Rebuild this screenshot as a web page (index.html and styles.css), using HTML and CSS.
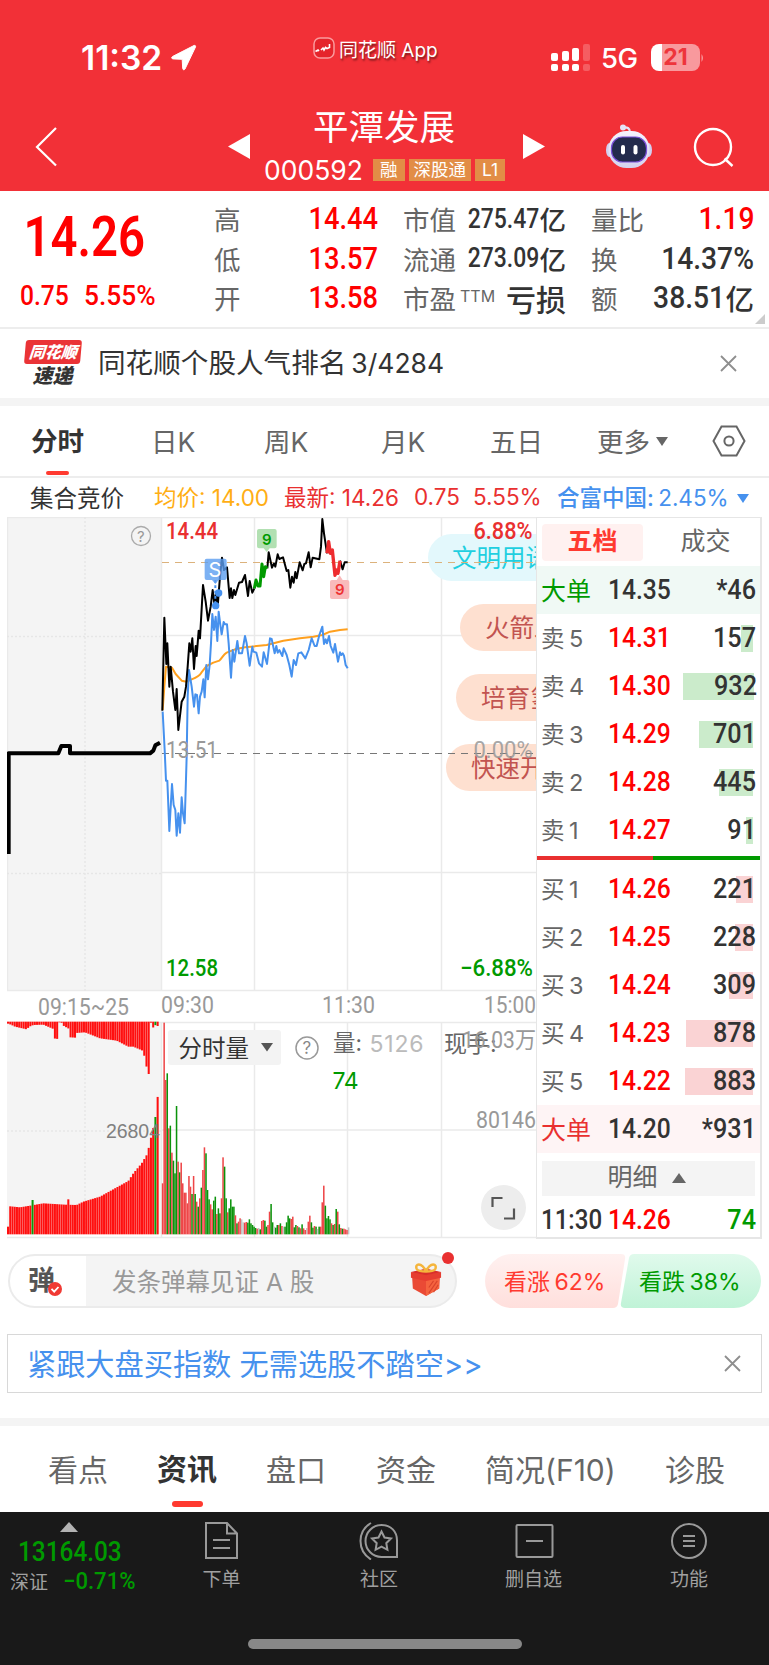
FILE: index.html
```html
<!DOCTYPE html>
<html lang="zh-CN">
<head>
    <meta charset="UTF-8">
    <meta name="viewport" content="width=device-width, initial-scale=1.0">
    <title>平潭发展 000592</title>
    <link rel="stylesheet" href="styles.css">
</head>
<body>

    <!-- Header -->
    <header class="header">
        <div class="status-bar">
            <div class="status-time"><span>11:32</span>
                <svg width="27" height="27" viewBox="0 0 27 27"><path d="M24 1.500 2.500 12.500c-1.300.8-1 2.300.5 2.400l9.200.4.500 9.200c.1 1.500 1.700 1.700 2.300.5L25.500 3c.4-1.200-.4-1.900-1.500-1.500z" fill="#fff" stroke="#fff" stroke-linejoin="round"/></svg>
            </div>
            <div class="status-app">
                <svg width="22" height="22" viewBox="0 0 22 22"><rect x="1" y="1" width="20" height="20" rx="6" fill="#e5242b" stroke="#fa9a9d" stroke-width="1.500"/><path d="M2.500 14.500l2.500-1.500 1 1M8 13l2-2 1 2 1.500-2.500 1.500 1 2.500-1V7" stroke="#fff" stroke-width="1.600" fill="none"/></svg>
                <span>同花顺 App</span>
            </div>
            <div class="status-right">
                <svg width="39" height="28" viewBox="0 0 39 28" fill="#fff">
                    <rect x="0" y="9" width="7" height="8" rx="2"/><rect x="11" y="7" width="7" height="10" rx="2"/><rect x="21" y="4" width="7" height="13" rx="2"/><rect x="32" y="0" width="7" height="17" rx="2" opacity=".22"/>
                    <rect x="0" y="20" width="7" height="7" rx="2"/><rect x="11" y="20" width="7" height="7" rx="2"/><rect x="21" y="20" width="7" height="7" rx="2"/><rect x="32" y="20" width="7" height="7" rx="2" opacity=".22"/>
                </svg>
                <span class="network">5G</span>
                <span class="battery">21</span>
                <svg width="4" height="8" viewBox="0 0 4 8"><path d="M1.500 0q3 4 0 8z" fill="#f8999d"/></svg>
            </div>
        </div>
        <div class="title-bar">
            <svg class="back" width="22" height="40" viewBox="0 0 22 40"><path d="M21 1 2 20 21 38.500" stroke="#fff" stroke-width="2.200" fill="none"/></svg>
            <svg class="prev" width="22" height="25" viewBox="0 0 22 25"><path d="M22 0v25L0 12.500z" fill="#fff"/></svg>
            <div class="stock">
                <h1>平潭发展</h1>
                <div class="stock-code">
                    <span class="code">000592</span>
                    <span class="tag">融</span>
                    <span class="tag">深股通</span>
                    <span class="tag">L1</span>
                </div>
            </div>
            <svg class="next" width="22" height="25" viewBox="0 0 22 25"><path d="M0 0v25l22-12.500z" fill="#fff"/></svg>
            <svg class="robot" width="48" height="46" viewBox="0 0 48 46">
                <defs>
                    <linearGradient id="head" x1="0" y1="0" x2="0" y2="1"><stop offset="0" stop-color="#f4f3fd"/><stop offset="1" stop-color="#d5d2ee"/></linearGradient>
                </defs>
                <path d="M18 3.500q7-1 7 5" stroke="#e5e3f6" stroke-width="2.200" fill="none"/>
                <circle cx="18" cy="3.500" r="3" fill="#e5e3f6"/>
                <ellipse cx="4.500" cy="26" rx="3.500" ry="7" fill="#d3cff0"/><ellipse cx="43.500" cy="26" rx="3.500" ry="7" fill="#d3cff0"/>
                <rect x="3.500" y="7" width="41" height="37" rx="18" fill="url(#head)"/>
                <rect x="6.500" y="13" width="35" height="25" rx="11" fill="#232b4c" stroke="#7a50d8" stroke-width="1.200"/>
                <rect x="16" y="21" width="4" height="9.500" rx="2" fill="#fff"/><rect x="28.500" y="21" width="4" height="9.500" rx="2" fill="#fff"/>
            </svg>
            <svg class="search" width="42" height="42" viewBox="0 0 42 42" fill="none" stroke="#fff" stroke-width="2.400"><circle cx="20" cy="20" r="18"/><path d="M31.500 31.500 39.500 39"/></svg>
        </div>
    </header>

    <!-- Quote summary -->
    <section class="quote">
        <div class="price">
            <div class="din last">14.26</div>
            <div class="change"><span class="din">0.75</span><span class="din">5.55%</span></div>
        </div>
        <dl class="quote-col col-1">
            <dt>高</dt><dd><span class="din red">14.44</span></dd>
            <dt>低</dt><dd><span class="din red">13.57</span></dd>
            <dt>开</dt><dd><span class="din red">13.58</span></dd>
        </dl>
        <dl class="quote-col col-2">
            <dt>市值</dt><dd><span class="din">275.47</span>亿</dd>
            <dt>流通</dt><dd><span class="din">273.09</span>亿</dd>
            <dt>市盈<small>TTM</small></dt><dd class="loss">亏损</dd>
        </dl>
        <dl class="quote-col col-3">
            <dt>量比</dt><dd><span class="din red">1.19</span></dd>
            <dt>换</dt><dd><span class="din">14.37%</span></dd>
            <dt>额</dt><dd><span class="din">38.51</span>亿</dd>
        </dl>
        <span class="corner"></span>
    </section>

    <!-- News line -->
    <section class="notice">
        <div class="notice-logo"><span class="logo-top">同花顺</span><span class="logo-bottom">速递</span></div>
        <p>同花顺个股人气排名<span>3/4284</span></p>
        <svg width="17" height="17" viewBox="0 0 17 17"><path d="M1 1l15 15M16 1 1 16" stroke="#8e8e8e" stroke-width="1.800"/></svg>
    </section>

    <!-- Period tabs -->
    <nav class="periods">
        <span class="active">分时</span>
        <span>日K</span>
        <span>周K</span>
        <span>月K</span>
        <span>五日</span>
        <span>更多<i class="down"></i></span>
        <svg width="34" height="32" viewBox="0 0 34 32" fill="none" stroke="#666" stroke-width="2"><path d="M9.500 1.500h15L32.500 16l-8 14.500h-15L1.500 16z"/><circle cx="17" cy="16" r="4.600"/></svg>
    </nav>

    <div class="info">
        <span class="auction">集合竞价</span>
        <span class="avg">均价: 14.00</span>
        <span class="latest">最新: 14.26</span>
        <span class="latest">0.75</span>
        <span class="latest">5.55%</span>
        <span class="peer"><b>合富中国:</b> 2.45%<i class="down"></i></span>
    </div>

    <!-- Chart and order book -->
    <main class="board">
        <svg class="chart" width="529" height="722" viewBox="7 517 529 722">
            <rect x="7" y="517" width="154" height="474" fill="#f4f4f4"/>
            <rect x="7" y="1022" width="154" height="212" fill="#f4f4f4"/>
            <g stroke="#eaeaea" stroke-width="1.500" fill="none">
                <path d="M7 517.500H537M161 635.500H537M161 872.500H537M7 990.500H537M7 1022.500H537M161 1130H537M7 1237.500H537"/>
                <path d="M7.500 517V991M161.500 517V991M161.500 1022V1238M254.500 517V991M347.500 517V991M441.500 517V991M254.500 1022V1238M347.500 1022V1238M441.500 1022V1238"/>
                <path d="M85 517V991M85 1022V1234M7 636.500H161M7 873.500H161M7 1131H161" stroke-dasharray="2 2" stroke="#e6e6e6"/>
            </g>

            <g font-size="24.500">
                <rect x="428" y="534" width="130" height="47" rx="23.500" fill="#e3f8fc"/>
                <rect x="460" y="604" width="130" height="47" rx="23.500" fill="#fee0d0"/>
                <rect x="456" y="674" width="130" height="47" rx="23.500" fill="#fee0d0"/>
                <rect x="446" y="744" width="130" height="47" rx="23.500" fill="#fee0d0"/>
                <text x="452" y="567" fill="#1fcfe0">文明用语</text>
                <text x="485" y="636.500" fill="#c25450">火箭发</text>
                <text x="481" y="706.500" fill="#c25450">培育氢</text>
                <text x="471" y="777" fill="#c25450">快速开</text>
            </g>

            <path d="M162 562.500H536" stroke="#dcb27c" stroke-width="1.200" stroke-dasharray="7 6"/>
            <path d="M162 753.500H536" stroke="#777" stroke-width="1.200" stroke-dasharray="7 6"/>

            <!-- price lines, drawn at three units per pixel -->
            <g transform="translate(0 510) scale(.33333)" fill="none" stroke-width="6" stroke-linejoin="round">
                <path d="M26 1032V730H175L184 708H210V730H450L460 722L466 706L480 698" stroke="#000" stroke-width="12"/>
                <path stroke="#ffa01e" d="M488 600L493 530L498 470L516 473L527 492L545 512L560 515L575 508C590 502 600 495 604 488L620 468L640 458L658 452C668 442 670 434 680 428L705 418L735 412L800 405L850 392L900 385L940 380L967 375L990 365L1020 360L1043 358"/>
                <path stroke="#4691ee" d="M488 605L494 720L498 812L502 812L508 963L516 822L521 885L526 900L530 977L535 910L540 968L545 862L549 910L554 940L560 740L563 560L567 480L575 530L582 590L586 553L591 555L596 610L600 560L605 545L610 508L614 562L619 465L624 508L629 465L633 400L637 312L642 360L647 320L652 393L656 305L661 345L665 373L671 336L675 343L681 343L686 400L693 503L698 420L703 455L712 393L717 430L726 430L735 378L740 400L749 467L757 410L760 425L769 428L777 460L786 470L791 427L801 462L810 385L815 387L824 430L829 408L833 428L838 420L847 438L851 415L860 435L868 465L875 500L881 450L888 465L895 430L904 427L916 445L926 420L935 385L944 408L950 408L958 375L967 350L972 402L977 388L981 400L987 378L992 408L1000 428L1005 402L1014 455L1020 427L1024 435L1028 430L1032 437L1037 465L1043 475"/>
                <path stroke="#000" d="M487 602L493 323L499 462L502 400L508 530L512 470L519 545L526 600L530 537L535 660L545 575L553 560L558 530L563 470L568 400L572 425L577 385L582 477L587 408L590 438L596 362L600 385L609 225L617 275L624 332L632 290L638 240L643 280L648 250L653 290L660 200L666 143L672 180L681 172L689 264L693 235L697 264L702 240L706 255L717 218L726 216L735 195L744 258L749 213L757 248L763 235M802 175L806 127L816 173L822 160L826 170L833 133L838 147L849 142L860 183L865 180L871 233L876 200L881 218L886 186L890 205L899 157L908 181L913 162L918 160L926 127L932 172L938 143L958 148L963 110L967 27L972 70L981 130M1020 152L1028 178L1034 157L1043 157"/>
                <path stroke="#009a00" stroke-width="9" d="M763 235L768 210L774 228L780 228L786 162L791 200L796 170L802 175"/>
                <path stroke="#ee2c2f" stroke-width="10" d="M981 130L986 95L991 130L997 120L1005 196L1010 180L1014 190L1020 152"/>

                <path d="M646 210V287" stroke="#4691ee" stroke-dasharray="8 8"/>
                <circle cx="656" cy="249" r="11" fill="#4691ee"/>
                <circle cx="647" cy="287" r="11" fill="#4691ee"/>
                <path d="M620 146H674q6 0 6 6V204q0 6-6 6H656l-10 12l-10-12H620q-6 0-6-6V152q0-6 6-6z" fill="#5b9df0" fill-opacity=".8"/>
                <path d="M777 57H824q6 0 6 6V109q0 6-6 6H809l-9 11l-9-11H777q-6 0-6-6V63q0-6 6-6z" fill="#b2e0b2"/>
                <path d="M996 267H1042q6 0 6-6V216q0-6-6-6H1028l-9-14l-9 14H996q-6 0-6 6V261q0 6 6 6z" fill="#f9babb"/>
            </g>
            <text x="208.500" y="577" font-size="20" fill="#fff" class="latin">S</text>
            <text x="262" y="545" font-size="15" fill="#009a00" class="latin" font-weight="600">9</text>
            <text x="335" y="595" font-size="15" fill="#e33" class="latin" font-weight="600">9</text>

            <g class="axis" font-size="23">
                <text x="166" y="539" textLength="52" lengthAdjust="spacingAndGlyphs" fill="#e93030" font-weight="500">14.44</text>
                <text x="473.500" y="539" textLength="59" lengthAdjust="spacingAndGlyphs" fill="#e93030" font-weight="500">6.88%</text>
                <text x="166" y="757.500" textLength="52" lengthAdjust="spacingAndGlyphs" fill="#999">13.51</text>
                <text x="473.500" y="757.500" textLength="59" lengthAdjust="spacingAndGlyphs" fill="#999" opacity=".85">0.00%</text>
                <text x="166" y="976" textLength="52" lengthAdjust="spacingAndGlyphs" fill="#009a00" font-weight="500">12.58</text>
                <text x="460" y="976" textLength="73" lengthAdjust="spacingAndGlyphs" fill="#009a00" font-weight="500">−6.88%</text>
                <text x="38" y="1015" textLength="91" lengthAdjust="spacingAndGlyphs" fill="#999">09:15~25</text>
                <text x="161" y="1013" textLength="53" lengthAdjust="spacingAndGlyphs" fill="#999">09:30</text>
                <text x="322" y="1013" textLength="53" lengthAdjust="spacingAndGlyphs" fill="#999">11:30</text>
                <text x="484" y="1013" textLength="52" lengthAdjust="spacingAndGlyphs" fill="#999">15:00</text>
            </g>

            <circle cx="141" cy="536" r="9.500" fill="none" stroke="#aaa" stroke-width="1.300"/>
            <text x="137" y="541.500" font-size="15" fill="#999" class="latin">?</text>

            <g id="volume" transform="translate(0 860) scale(.33333)"></g>

            <rect x="168" y="1030" width="113" height="35" rx="3" fill="#f3f3f3"/>
            <text x="178.500" y="1056.500" font-size="23.500" fill="#333">分时量</text>
            <path d="M261 1043h12l-6 8.500z" fill="#555"/>
            <circle cx="307" cy="1048" r="11" fill="none" stroke="#999" stroke-width="1.500"/>
            <text x="302.500" y="1054" font-size="17" fill="#888" class="latin">?</text>
            <text x="333" y="1051" font-size="22.500" fill="#666">量:</text>
            <text x="369.500" y="1052" font-size="23" fill="#bbb" class="latin" textLength="54">5126</text>
            <text x="332.500" y="1089" font-size="23" fill="#009a00" class="latin" textLength="26">74</text>
            <text x="444" y="1052" font-size="23" fill="#666">现手:</text>
            <g class="axis" fill="#999">
                <text x="462" y="1048" font-size="23" textLength="74" lengthAdjust="spacingAndGlyphs">16.03万</text>
                <text x="476" y="1128" font-size="23" textLength="60" lengthAdjust="spacingAndGlyphs">80146</text>
            </g>
            <text x="106" y="1137.500" font-size="19.500" fill="#808080" class="arial" textLength="54">26804</text>

            <circle cx="503.500" cy="1207.500" r="22.500" fill="#ededed"/>
            <path d="M492.500 1207V1198h10M504 1218.500h10v-10" fill="none" stroke="#555" stroke-width="2.200"/>
        </svg>

        <div class="book">
            <div class="book-tabs"><span class="active">五档</span><span>成交</span></div>
            <div class="book-row big sell"><span>大单</span><span class="din">14.35</span><span class="din qty">*46</span></div>
            <div class="book-row sell"><i style="width:12px"></i><span>卖 5</span><span class="din">14.31</span><span class="din qty">157</span></div>
            <div class="book-row sell"><i style="width:71px"></i><span>卖 4</span><span class="din">14.30</span><span class="din qty">932</span></div>
            <div class="book-row sell"><i style="width:54px"></i><span>卖 3</span><span class="din">14.29</span><span class="din qty">701</span></div>
            <div class="book-row sell"><i style="width:34px"></i><span>卖 2</span><span class="din">14.28</span><span class="din qty">445</span></div>
            <div class="book-row sell"><i style="width:7px"></i><span>卖 1</span><span class="din">14.27</span><span class="din qty">91</span></div>
            <div class="ratio"></div>
            <div class="book-row buy"><i style="width:17px"></i><span>买 1</span><span class="din">14.26</span><span class="din qty">221</span></div>
            <div class="book-row buy"><i style="width:18px"></i><span>买 2</span><span class="din">14.25</span><span class="din qty">228</span></div>
            <div class="book-row buy"><i style="width:24px"></i><span>买 3</span><span class="din">14.24</span><span class="din qty">309</span></div>
            <div class="book-row buy"><i style="width:67px"></i><span>买 4</span><span class="din">14.23</span><span class="din qty">878</span></div>
            <div class="book-row buy"><i style="width:68px"></i><span>买 5</span><span class="din">14.22</span><span class="din qty">883</span></div>
            <div class="book-row big buy"><span>大单</span><span class="din">14.20</span><span class="din qty">*931</span></div>
            <div class="detail">明细<i class="up"></i></div>
            <div class="book-row tick"><span class="din time">11:30</span><span class="din">14.26</span><span class="din qty">74</span></div>
        </div>
    </main>

    <!-- Bullet comments and vote -->
    <section class="barrage">
        <div class="barrage-input">
            <span class="toggle">弹
                <svg width="14" height="14" viewBox="0 0 14 14"><circle cx="7" cy="7" r="7" fill="#f03a34"/><path d="M3.500 6.800 6.200 9.600 10.500 5" stroke="#fff" stroke-width="1.800" fill="none"/></svg>
            </span>
            <span class="placeholder">发条弹幕见证 A 股</span>
            <svg class="gift" width="32" height="34" viewBox="0 0 34 36">
                <path d="M2 10 17 6l15 4-1 17-14 8L3 27z" fill="#ea4a35"/>
                <path d="M17 17l14-4v14l-14 8z" fill="#f5633f"/>
                <path d="M1 9.500 17 13l16-3.500v6L17 19 1 15.500z" fill="#e63d30"/>
                <path d="M1 9.500 17 6l16 3.500L17 13z" fill="#d92e2b"/>
                <path d="M20 32l9-13M20 26l5-7M25 31l5-8" stroke="#d9432c" stroke-width="1.200"/>
                <path d="M17 9C12-2 5 1 7 6c1.500 3 7 3 10 3zM17 9c5-11 12-8 10-3-1.500 3-7 3-10 3z" fill="none" stroke="#f5b53c" stroke-width="2.600"/>
            </svg>
            <i class="dot"></i>
        </div>
        <div class="vote">
            <svg width="276" height="54" viewBox="0 0 276 54">
                <defs>
                    <linearGradient id="bull" x1="0" y1="0" x2="0" y2="1"><stop offset="0" stop-color="#fff1f0"/><stop offset="1" stop-color="#ffdfdc"/></linearGradient>
                    <linearGradient id="bear" x1="0" y1="0" x2="0" y2="1"><stop offset="0" stop-color="#e0faec"/><stop offset="1" stop-color="#c0f3d7"/></linearGradient>
                </defs>
                <path d="M27 0H136q5 0 4 5L133 50q-1 4-5 4H27a27 27 0 0 1 0-54z" fill="url(#bull)"/>
                <path d="M149 0H249a27 27 0 0 1 0 54H140q-5 0-4-5L144 4q1-4 5-4z" fill="url(#bear)"/>
            </svg>
            <span class="bull">看涨 62%</span>
            <span class="bear">看跌 38%</span>
        </div>
    </section>

    <section class="promo">
        <a>紧跟大盘买指数 无需选股不踏空&gt;&gt;</a>
        <svg width="17" height="17" viewBox="0 0 17 17"><path d="M1 1l15 15M16 1 1 16" stroke="#8e8e8e" stroke-width="1.800"/></svg>
    </section>

    <nav class="sections">
        <span>看点</span>
        <span class="active">资讯</span>
        <span>盘口</span>
        <span>资金</span>
        <span>简况(F10)</span>
        <span>诊股</span>
    </nav>

    <!-- Bottom toolbar -->
    <footer class="toolbar">
        <div class="toolbar-items">
            <div class="index">
                <i class="up"></i>
                <span class="din index-value">13164.03</span>
                <div class="index-change">深证<span class="din">−0.71%</span></div>
            </div>
            <div class="tool">
                <svg width="36" height="38" viewBox="0 0 36 38"><path d="M2 1h21l10 10.500V36H2zM23 1v10.500h10M9 18h17M9 26h17"/></svg>
                <span>下单</span>
            </div>
            <div class="tool">
                <svg width="42" height="38" viewBox="0 0 42 38"><path d="M23.500 3C33 3 39 9.500 39 18.500V35H23.500a16 16 0 0 1 0-32zM13 1C-1 9-1 29 13 37.500M23.500 9.500l3 6 6.500 1-4.700 4.700 1.100 6.600-5.900-3.100-5.900 3.100 1.100-6.600L14 16.500l6.500-1z"/></svg>
                <span>社区</span>
            </div>
            <div class="tool">
                <svg width="40" height="38" viewBox="0 0 40 38"><rect x="2.500" y="3" width="36" height="32" rx="1"/><path d="M12 19h17"/></svg>
                <span>删自选</span>
            </div>
            <div class="tool">
                <svg width="38" height="38" viewBox="0 0 38 38"><circle cx="19" cy="19" r="17"/><path d="M13 14h12M13 19h12M13 24h12"/></svg>
                <span>功能</span>
            </div>
        </div>
        <div class="home-bar"></div>
    </footer>

    <script>
const volume = document.getElementById('volume');
const BASE = 1123;
const TOP = 485;

function bar(x, y1, y2, width, color) {
    const rect = document.createElementNS('http://www.w3.org/2000/svg', 'rect');
    rect.setAttribute('x', x);
    rect.setAttribute('y', Math.min(y1, y2));
    rect.setAttribute('width', width);
    rect.setAttribute('height', Math.abs(y2 - y1));
    rect.setAttribute('fill', color);
    volume.appendChild(rect);
}

// Read a value between the known points of a curve
function valueAt(points, x) {
    for (let i = 1; i < points.length; i++) {
        const [x0, y0] = points[i - 1];
        const [x1, y1] = points[i];
        if (x <= x1) {
            return y0 + (y1 - y0) * (x - x0) / (x1 - x0);
        }
    }
    return points[points.length - 1][1];
}

// Call auction: matched volume below, unmatched volume on top
const matched = [[21, 1038], [60, 1042], [90, 1037], [130, 1030], [195, 1034], [230, 1035], [250, 1025], [300, 1010], [345, 985], [385, 963], [400, 940], [425, 910], [440, 885], [450, 850], [455, 820], [462, 795], [469, 755], [475, 687]];
const unmatched = [[21, 490], [33, 494], [45, 500], [80, 508], [88, 500], [100, 495], [130, 494], [158, 506], [160, 535], [174, 537], [175, 487], [184, 487], [190, 497], [208, 507], [210, 532], [226, 533], [228, 519], [255, 517], [300, 535], [350, 542], [385, 560], [400, 560], [430, 573], [438, 615], [447, 645], [449, 487], [456, 489], [462, 512], [465, 495], [478, 500]];

for (let i = 0; i < 68; i++) {
    const x = 24 + i * 6.7;
    let top = valueAt(matched, x);
    let color = '#ff0f0f';
    if (i === 0) top = 1100;
    if (i === 27) top = 1018;
    if (i === 11) top = 1020;
    if (i === 11 || i === 66) color = '#0a9a0a';
    bar(x - 3, top, BASE, 6.1, color);
    bar(x - 3, TOP, valueAt(unmatched, x), 6.1, i === 11 ? '#ff0f0f' : color);
}

// Minute volume since the open: bar top and colour
const minutes = ('970r 488r 660r 640g 805r 797g 878r 902g 940g 738g 905r 937g 908r 970r 998r 998r 1030r 948r 980r 1002g 948r 1002g 1025r 1040g 1015r 983g ' +
    '930r 862r 880g 990g 1018g 1033r 1048r 1022g 1010g 1062r 1045g 1060g 1015r 892r 920g 1015g 1057r 1045g 1018g 1040g 1040g 1066r 1090g 1085r 1075r 1078x ' +
    '1087x 1088r 1086r 1088g 1078g 1090g 1095g 1100g 1104g 1106r 1104x 1108g 1083r 1080r 1082g 1100g 1095r 1055r 1032g 1087g 1100x 1103g 1095g 1095r 1090g 1098r ' +
    '1100x 1100g 1087g 1067g 1075g 1077r 1070r 1102g 1095g 1098r 1102g 1105r 1093g 1105r 1110r 1104x 1085r 1067r 1087g 1103g 1098r 1100g 1107x 1100g 1100r 1027r ' +
    '977r 1037g 1075g 1068g 1078g 1090r 1095g 1092r 1047g 1055r 1093g 1104r 1106g 1106r 1108r 1110r 1102x').split(' ');
const colors = { r: '#ee4648', g: '#0b930b', x: '#c4c4c4' };

minutes.forEach((item, i) => {
    bar(485.5 + i * 4.65, parseInt(item), BASE, 4.6, colors[item.slice(-1)]);
});
    </script>
</body>
</html>
```
FILE: styles.css
```css
* {
    margin: 0;
    padding: 0;
    box-sizing: border-box;
}

body {
    width: 769px;
    height: 1665px;
    overflow: hidden;
    background: #fff;
    color: #333;
    font-family: Inter, "Noto Sans CJK SC", sans-serif;
}

i {
    font-style: normal;
}

svg {
    display: block;
    flex: none;
}

/* Narrow figures */
.din {
    display: inline-block;
    font-family: Roboto, sans-serif;
    font-weight: 500;
    transform: scaleX(0.88);
    transform-origin: left center;
}

.red {
    color: #f00;
}

.down {
    display: inline-block;
    border: 6px solid transparent;
    border-top: 9px solid #666;
    border-bottom: none;
}

.up {
    display: inline-block;
    border: 7px solid transparent;
    border-bottom: 10px solid #666;
    border-top: none;
}

/* Header */
.header {
    height: 191px;
    background: #f23037;
    color: #fff;
}

.status-bar {
    display: grid;
    grid-template-columns: 313px 238px auto;
    height: 110px;
    padding-top: 36px;
}

.status-time {
    display: flex;
    align-items: center;
    height: 43px;
    padding-left: 81px;
    font-size: 33.5px;
    font-weight: 600;
}

.status-time span {
    width: 89px;
}

.status-app {
    display: flex;
    align-items: center;
    gap: 4px;
    height: 24px;
    font-size: 19px;
    text-shadow: 1px 2px 2px rgba(0, 0, 0, 0.5);
}

.status-right {
    display: flex;
    align-items: center;
    height: 43px;
}

.network {
    width: 61px;
    padding-left: 11px;
    font-size: 27.5px;
    font-weight: 500;
    letter-spacing: -0.5px;
}

.battery {
    width: 49px;
    height: 27px;
    border-radius: 8px;
    background: linear-gradient(90deg, #fff 22%, #f8999d 22%);
    color: #ee343b;
    font-size: 23px;
    font-weight: 700;
    line-height: 27px;
    text-align: center;
}

.title-bar {
    display: flex;
    align-items: flex-start;
}

.back {
    margin: 17px 0 0 35px;
}

.prev {
    margin: 24px 0 0 171px;
}

.stock {
    width: 273px;
    padding-left: 14px;
}

.stock h1 {
    height: 47px;
    padding-left: 49px;
    margin-top: -6px;
    font-size: 35.5px;
    font-weight: 400;
    line-height: 47px;
}

.stock-code {
    display: flex;
    align-items: center;
    gap: 4px;
    height: 38px;
}

.code {
    width: 105px;
    font-size: 26.5px;
}

.tag {
    height: 22px;
    padding: 0 7px;
    background: #e28d46;
    font-size: 17.5px;
    line-height: 22px;
}

.tag:nth-child(3) {
    padding: 0 5px;
}

.next {
    margin-top: 24px;
}

.robot {
    margin: 14px 0 0 60px;
}

.search {
    margin: 17px 0 0 40px;
}

/* Quote summary */
.quote {
    position: relative;
    display: flex;
    height: 138px;
    border-bottom: 2px solid #ededed;
}

.price {
    width: 214px;
    padding: 13px 0 0 20px;
    color: #f00;
}

.last {
    height: 66px;
    padding-left: 4px;
    font-size: 56px;
    font-weight: 600;
    line-height: 66px;
    transform: scaleX(0.845);
}

.change {
    display: flex;
    gap: 8px;
    margin-top: 9px;
    font-size: 28px;
    line-height: 34px;
}

.change .din + .din {
    transform: scaleX(0.94);
}

.quote-col {
    display: grid;
    grid-template-columns: auto 1fr;
    grid-auto-rows: 39.5px;
    align-items: center;
    padding-top: 8px;
    font-size: 26.5px;
    white-space: nowrap;
}

.quote-col dt {
    color: #666;
}

.quote-col dd {
    display: flex;
    justify-content: flex-end;
    align-items: center;
    font-weight: 500;
}

.quote-col .din {
    font-size: 31px;
    transform-origin: right center;
}

.col-1 {
    width: 164px;
}

.quote-col.col-2 {
    grid-template-columns: 60px 103px;
    width: 163px;
    margin-left: 25px;
}

.quote-col.col-2 .din {
    font-size: 27px;
    transform: scaleX(0.85);
}

.col-2 small {
    margin-left: 4px;
    font-size: 16px;
    vertical-align: 7px;
}

.quote-col .loss {
    font-size: 30px;
}

.col-3 {
    width: 163px;
    margin-left: 25px;
}

.col-3 dd {
    font-size: 28.5px;
}

.quote-col.col-3 .din {
    transform: scaleX(0.91);
}

.corner {
    position: absolute;
    right: 4px;
    bottom: 3px;
    border: 5px solid #ccc;
    border-top-color: transparent;
    border-left-color: transparent;
}

/* News line */
.notice {
    display: flex;
    align-items: center;
    height: 77px;
    padding: 0 32px 0 24px;
    border-bottom: 8px solid #f4f4f4;
}

.notice-logo {
    display: flex;
    flex-direction: column;
    align-items: center;
    width: 57px;
    height: 48px;
    font-style: italic;
    font-weight: 900;
}

.logo-top {
    width: 56px;
    height: 25px;
    border-radius: 3px;
    background: #ea3336;
    color: #fff;
    font-size: 16px;
    line-height: 24px;
    text-align: center;
    transform: skewX(-5deg);
}

.logo-bottom {
    font-size: 20px;
    line-height: 25px;
}

.notice p {
    flex: 1;
    margin: -5px 0 0 17px;
    font-size: 27.6px;
}

.notice p span {
    margin-left: 5px;
    font-size: 26.5px;
}

/* Period tabs */
.periods {
    display: grid;
    grid-template-columns: 120px 113px 117px 109px 107px 116px auto;
    align-items: center;
    height: 72px;
    padding-left: 31px;
    border-bottom: 2px solid #ededed;
    color: #666;
    font-size: 26.5px;
}

.periods span {
    margin-top: -2px;
}

.periods svg {
    margin-left: -1px;
}

.periods .down {
    margin: 0 0 6px 6px;
}

.periods .active,
.sections .active {
    display: flex;
    flex-direction: column;
    align-items: flex-start;
    height: 100%;
    color: #333;
    font-weight: 600;
}

.periods .active {
    line-height: 73px;
}

.periods .active::after,
.sections .active::after {
    content: "";
    width: 23px;
    height: 6px;
    margin: -7px 0 0 15px;
    border-radius: 3px;
    background: #ff3a30;
}

.info {
    display: grid;
    grid-template-columns: 124px 130px 130px 59px 84px auto;
    align-items: center;
    height: 39px;
    padding: 0 0 4px 30px;
    font-size: 22.5px;
    white-space: nowrap;
}

.auction {
    padding-top: 2px;
    font-size: 23.5px;
}

.avg {
    color: #ffae14;
}

.latest {
    color: #e93030;
}

.peer {
    color: #4691ee;
    word-spacing: -2px;
}

.peer b {
    font-weight: 500;
}

.info .down {
    margin: 0 0 3px 8px;
    border-top-color: #4691ee;
}

/* Chart and order book */
.board {
    display: flex;
    height: 722px;
    padding-left: 7px;
}

.chart {
    overflow: hidden;
}

.chart .latin {
    font-family: Inter, sans-serif;
}

.chart .arial {
    font-family: "Liberation Sans", sans-serif;
}

.axis {
    font-family: Roboto, "Noto Sans CJK SC", sans-serif;
}

.book {
    width: 226px;
    border: 1px solid #e6e6e6;
    border-width: 1px 2px 2px 1px;
}

.book-tabs {
    display: flex;
    align-items: center;
    height: 48px;
    padding-left: 5px;
    color: #666;
    font-size: 25px;
}

.book-tabs span {
    width: 101px;
    height: 37px;
    border-radius: 4px;
    line-height: 35px;
    text-align: center;
}

.book-tabs span + span {
    flex: 1;
    padding-left: 8px;
}

.book-tabs .active {
    background: #fff1f0;
    color: #ff3a30;
    font-weight: 700;
}

.book-row {
    display: grid;
    grid-template-columns: 67px 75px 1fr;
    grid-template-rows: 48px;
    align-items: center;
    padding: 0 4px;
    color: #666;
    font-size: 23.5px;
    word-spacing: -2px;
}

.book-row .din {
    grid-row: 1;
    grid-column: 2;
    color: #f00;
    font-size: 28px;
}

.book-row span {
    grid-row: 1;
    grid-column: 1;
    margin-top: -2px;
}

.book-row .qty {
    grid-column: 3;
    color: #333;
    text-align: right;
    transform-origin: right center;
    transform: scaleX(0.9);
}

.book-row i {
    grid-row: 1;
    grid-column: 3;
    justify-self: end;
    height: 27px;
    margin-right: 3px;
}

.sell i {
    background: #cbebcb;
}

.buy i {
    background: #fad3d4;
}

.big {
    font-size: 25px;
}

.big.sell {
    background: #f0f9f5;
    color: #009a00;
}

.big.buy {
    background: #fef4f5;
    color: #e93030;
}

.big .din {
    color: #333;
}

.ratio {
    height: 4px;
    margin: 2px 0 5px;
    background: linear-gradient(90deg, #e93030 52%, #009a00 52%);
}

.detail {
    height: 35px;
    margin: 8px 5px 0 5px;
    padding-right: 4px;
    background: #f4f4f4;
    color: #666;
    font-size: 25px;
    line-height: 33px;
    text-align: center;
}

.detail .up {
    margin-left: 14px;
    vertical-align: 3px;
}

.book-row .time {
    grid-column: 1;
    color: #333;
    transform: scaleX(0.86);
}

.tick .qty {
    color: #009a00;
}

/* Bullet comments and vote */
.barrage {
    display: flex;
    justify-content: space-between;
    padding: 15px 8px 0;
}

.barrage-input {
    position: relative;
    display: flex;
    align-items: center;
    width: 449px;
    height: 54px;
    border: 2px solid #ebebeb;
    border-radius: 27px;
    background: linear-gradient(90deg, #fff 76px, #f4f4f4 76px);
}

.toggle {
    display: flex;
    align-items: flex-end;
    width: 102px;
    padding-left: 18px;
    color: #555;
    font-size: 27px;
    font-weight: 700;
    line-height: 34px;
}

.toggle svg {
    margin: 0 0 2px -7px;
}

.placeholder {
    width: 298px;
    margin-top: -2px;
    color: #999;
    font-size: 24.5px;
}

.gift {
    margin-bottom: 2px;
}

.dot {
    position: absolute;
    top: -4px;
    right: 1px;
    width: 12px;
    height: 12px;
    border-radius: 50%;
    background: #e93030;
}

.vote {
    display: grid;
    grid-template-columns: 147px 129px;
    align-items: center;
    font-size: 23px;
    word-spacing: -2px;
}

.vote span {
    margin-top: -2px;
}

.vote svg {
    grid-area: 1 / 1 / 2 / 3;
}

.bull {
    grid-area: 1 / 1;
    padding-left: 19px;
    color: #ff3a30;
}

.bear {
    grid-area: 1 / 2;
    padding-left: 7px;
    color: #009a00;
}

.promo {
    display: flex;
    justify-content: space-between;
    align-items: center;
    height: 59px;
    margin: 26px 7px 25px 7px;
    padding: 0 20px 0 19px;
    border: 1.5px solid #d8d8d8;
    color: #4691ee;
    font-size: 29.2px;
}

.promo a {
    margin-top: -4px;
}

/* Section tabs */
.sections {
    display: grid;
    grid-template-columns: 109px 109px 110px 109px 180px auto;
    align-items: center;
    height: 94px;
    padding-left: 48px;
    border-top: 8px solid #f4f4f4;
    color: #666;
    font-size: 30px;
    white-space: nowrap;
}

.sections span {
    margin-top: -2px;
}

.sections .active {
    line-height: 89px;
}

.sections .active::after {
    width: 31px;
    margin-top: -13px;
}

/* Bottom toolbar */
.toolbar {
    height: 153px;
    background: #191919;
    color: #a0a0a0;
}

.toolbar-items {
    display: grid;
    grid-template-columns: 144px 155px 160px 149px 162px;
    height: 127px;
}

.index {
    padding-left: 10px;
    line-height: 1;
}

.index .up {
    display: block;
    width: 0;
    margin: 10px 0 0 50px;
    border-width: 0 9px 10px;
    border-bottom-color: #b3b3b3;
}

.index .din {
    color: #009a00;
    font-weight: 400;
}

.index .index-value {
    margin: 6px 0 0 8px;
    font-size: 28px;
    font-weight: 500;
    transform: scaleX(0.87);
}

.index-change {
    margin-top: 4px;
    font-size: 19px;
    white-space: nowrap;
}

.index-change .din {
    margin-left: 15px;
    font-size: 23px;
    font-weight: 500;
    transform: scaleX(0.96);
}

.tool {
    display: flex;
    flex-direction: column;
    align-items: center;
    padding-top: 10px;
    font-size: 19px;
}

.tool svg {
    fill: none;
    stroke: #999;
    stroke-width: 2;
}

.tool span {
    margin-top: 6px;
    line-height: 28px;
}

.home-bar {
    width: 274px;
    height: 10px;
    margin: 0 auto;
    border-radius: 5px;
    background: #888;
}
```
